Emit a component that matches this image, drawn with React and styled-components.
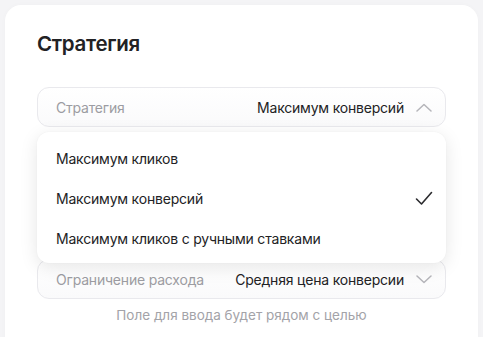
import React, {useState} from 'react';
import styled, {createGlobalStyle} from 'styled-components';

const GlobalStyle = createGlobalStyle`
    html, body {
        margin: 0;
        background: #f4f4f6;
        font-family: Inter, "Noto Sans", sans-serif;
        -webkit-font-smoothing: antialiased;
    }
`;

const strategies = [
    'Максимум кликов',
    'Максимум конверсий',
    'Максимум кликов с ручными ставками',
];

function Chevron({up}) {
    return <svg width="16" height="9" viewBox="0 0 16 9" fill="none">
        <path d={up ? 'M1 8L8 1.5L15 8' : 'M1 1L8 7.5L15 1'}
              stroke="#b5b5ba" strokeWidth="1.5" strokeLinecap="round" strokeLinejoin="round"/>
    </svg>
}

function Check() {
    return <svg width="18" height="15" viewBox="0 0 18 15" fill="none">
        <path d="M1.5 8L6.5 13L16.5 1.5" stroke="#2b2b2e" strokeWidth="1.6"
              strokeLinecap="round" strokeLinejoin="round"/>
    </svg>
}

function Select({label, value, open, children}) {
    return <SelectWrap>
        <Field>
            <Label>{label}</Label>
            <Value>{value}</Value>
            <Chevron up={open}/>
        </Field>
        {open && children}
    </SelectWrap>
}

export default function App() {
    const [strategy, setStrategy] = useState('Максимум конверсий');

    return <Page>
        <GlobalStyle/>
        <Card>
            <Title>Стратегия</Title>
            <Select label="Стратегия" value={strategy} open>
                <Menu>
                    {strategies.map(s => (
                        <Option key={s} onClick={() => setStrategy(s)}>
                            {s}
                            {s === strategy && <Check/>}
                        </Option>
                    ))}
                </Menu>
            </Select>
            <Section>
                <Select label="Ограничение расхода" value="Средняя цена конверсии"/>
                <Hint>Поле для ввода будет рядом с целью</Hint>
            </Section>
        </Card>
    </Page>
}

const Page = styled.div`
    padding: 5px 5px 0 5px;
    height: 337px;
    box-sizing: border-box;
    overflow: hidden;
`;

const Card = styled.div`
    background: #fff;
    border-radius: 16px;
    padding: 25px 32px 40px 32px;
    min-height: 400px;
    box-sizing: border-box;
    box-shadow: 0 0 6px rgba(0, 0, 0, 0.02);
`;

const Title = styled.h2`
    margin: 0 0 29px 0;
    font-size: 20.5px;
    line-height: 28px;
    font-weight: 600;
    color: #222224;
    letter-spacing: -0.3px;
`;

const Section = styled.div`
    margin-top: 132px;
    display: flex;
    flex-direction: column;
    gap: 8px;
`;

const SelectWrap = styled.div`
    position: relative;
`;

const Field = styled.div`
    height: 40px;
    box-sizing: border-box;
    display: flex;
    align-items: center;
    gap: 12px;
    padding: 0 13px 0 18px;
    border: 1px solid #e9e9ed;
    border-radius: 12px;
    background: linear-gradient(180deg, #ffffff 0%, #fafafb 100%);
    font-size: 14px;
    letter-spacing: -0.2px;
    svg {
        flex-shrink: 0;
    }
`;

const Label = styled.span`
    flex: 1;
    color: #9c9ca2;
    white-space: nowrap;
`;

const Value = styled.span`
    color: #222224;
    white-space: nowrap;
`;

const Menu = styled.div`
    position: absolute;
    z-index: 2;
    top: calc(100% + 5px);
    left: 0;
    right: 0;
    padding: 6px 0 5px 0;
    background: #fff;
    border-radius: 12px;
    box-shadow: 0 4px 18px rgba(0, 0, 0, 0.1), 0 0 2px rgba(0, 0, 0, 0.04);
`;

const Option = styled.div`
    height: 40px;
    display: flex;
    align-items: center;
    justify-content: space-between;
    padding: 0 13px 0 19px;
    font-size: 14px;
    letter-spacing: -0.2px;
    color: #222224;
    cursor: pointer;
`;

const Hint = styled.div`
    text-align: center;
    font-size: 13.5px;
    line-height: 16px;
    color: #a3a3a8;
`;
